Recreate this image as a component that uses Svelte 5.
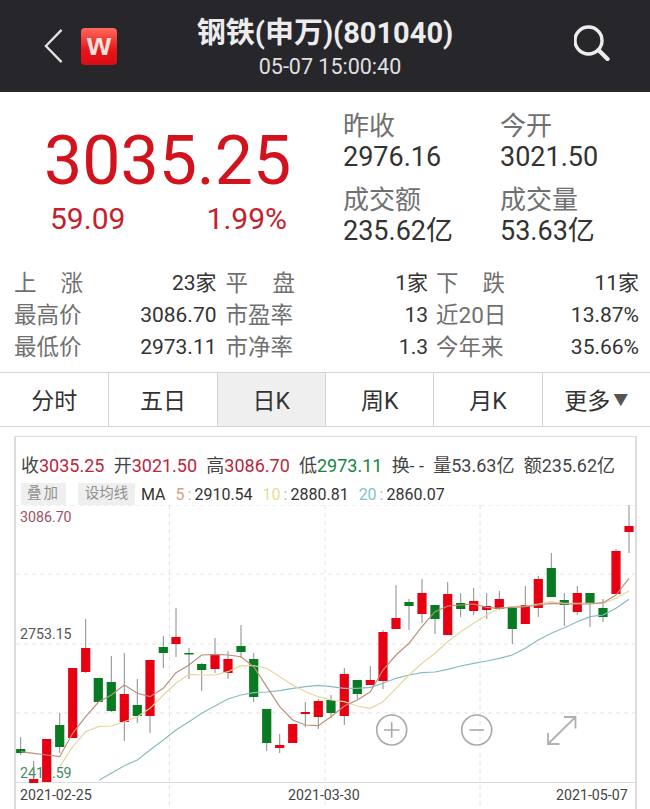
<script>
  const stats = [
    ['上涨', '23家', '平盘', '1家', '下跌', '11家'],
    ['最高价', '3086.70', '市盈率', '13', '近20日', '13.87%'],
    ['最低价', '2973.11', '市净率', '1.3', '今年来', '35.66%']
  ];
  const tabs = ['分时', '五日', '日K', '周K', '月K', '更多'];

  // x, wick top, wick bottom, body top, body bottom, up
  const candles = [
    [20.7, 737, 755, 749, 753, 0], [33.7, 761, 782, 779, 783, 1], [46.7, 739, 782, 739, 782, 1],
    [59.7, 713, 753, 725, 747, 0], [72.7, 668, 738, 668, 738, 1], [85.7, 619, 673, 648, 672, 1],
    [98.3, 678, 702, 678, 702, 0], [111.3, 656, 712, 682, 711, 0], [124.3, 653, 741, 694, 722, 1],
    [137.3, 679, 723, 705, 716, 0], [150, 660, 733, 660, 716, 1], [163.3, 636, 668, 647, 653, 0],
    [176, 608, 657, 637, 644, 1], [189, 648, 679, 653, 654.5, 0], [201.7, 663, 691, 664, 670, 0],
    [215, 638, 673, 655, 669, 1], [228, 651, 679, 659, 673, 1], [241, 625, 658, 646, 652, 0],
    [253.7, 653, 702, 659, 697, 0], [266.7, 709, 751, 709, 743, 0], [279.7, 734, 753, 745, 748, 1],
    [292.7, 724, 743, 724, 743, 1], [305.3, 702, 727, 712, 714, 1], [318.3, 699, 729, 701, 717, 1],
    [331, 695, 718, 700, 713, 0], [344.3, 668, 725, 674, 716, 1], [357.3, 680, 699, 680, 694, 0],
    [370.3, 666, 685, 680, 685, 1], [383, 630, 689, 632, 681, 1], [396, 585, 629, 618, 629, 1],
    [409, 599, 630, 602, 606, 0], [422, 579, 623, 593, 614, 1], [435, 605, 634, 605, 619, 0],
    [447.7, 582, 635, 594, 635, 1], [460.7, 593, 617, 603, 609, 0], [473.7, 588, 615, 601, 611, 1],
    [486.7, 593, 619, 606, 610, 1], [499.3, 591, 610, 599, 609, 1], [512.3, 608, 644, 608, 629, 0],
    [525.3, 586, 624, 605, 624, 1], [538.3, 576, 617, 579, 608, 1], [551.3, 553, 597, 568, 597, 0],
    [564.3, 593, 626, 600, 605, 0], [577.3, 586, 615, 593, 612, 1], [590, 593, 627, 593, 603, 0],
    [603, 599, 622, 608, 617, 0], [616, 549, 594, 551, 594, 1], [629, 504, 553, 526, 532, 1]
  ];

  const ma5 = '20.7,751.7 33.7,753.3 46.7,755 59.7,756.7 72.7,733.3 85.7,716.7 98.3,702.3 111.3,695 124.3,685 137.3,693.3 150,696.7 163.3,688.3 176,672.7 189,665 201.7,655 215,654.3 228,655 241,656.7 253.7,666.7 266.7,686.7 279.7,706.7 292.7,720 305.3,725 318.3,725.7 331,716.7 344.3,706 357.3,700 370.3,691.7 383,670 396,655 409,643.3 422,626.7 435,611.7 447.7,606 460.7,605 473.7,604 486.7,607.3 499.3,608.3 512.3,607.3 525.3,606.7 538.3,605 551.3,603.3 564.3,604 577.3,604 590,604 603,602.7 616,595 629,578.3';
  const ma10 = '59.7,766.7 72.7,746.7 85.7,731.7 98.3,726.7 111.3,726 124.3,721.7 137.3,716.7 150,708.3 163.3,695 176,683.3 189,674.3 201.7,675 215,675 228,671.7 241,665.7 253.7,665.7 266.7,668.3 279.7,676.7 292.7,685 305.3,691.7 318.3,696.7 331,700 344.3,701.7 357.3,706 370.3,708.3 383,701.7 396,688.3 409,675 422,663.3 435,653.3 447.7,641.7 460.7,631.7 473.7,623.3 486.7,615 499.3,608.3 512.3,606.7 525.3,606 538.3,604 551.3,601.7 564.3,603.3 577.3,603.3 590,603.3 603,603.3 616,598.3 629,591';
  const ma20 = '99.3,780 111.3,773.3 124.3,765.7 137.3,760 150,750 163.3,740 176,730 189,721.7 201.7,713.3 215,706 228,699 241,695 253.7,692.7 266.7,692 279.7,690.7 292.7,688.3 305.3,686.7 318.3,685.3 331,686.7 344.3,688.3 357.3,688.3 370.3,687.3 383,683.3 396,678.3 409,675 422,672.7 435,672 447.7,669.3 460.7,666 473.7,663.3 486.7,661 499.3,658.3 512.3,655 525.3,648.3 538.3,640 551.3,633.3 564.3,627.7 577.3,621.7 590,616.7 603,615 616,608.3 629,599.3';

  const gridY = [505, 574, 644, 713];
  const gridX = [169.5, 325, 480];
  const dates = [[20, '2021-02-25'], [288, '2021-03-30'], [556, '2021-05-07']];
</script>

<main>
  <header>
    <div class="left">
      <svg class="back" viewBox="0 0 20 36" aria-hidden="true">
        <path d="M18.5 1 L2 18 L18.5 35" fill="none" stroke="#e4e4e4" stroke-width="2.4" />
      </svg>
      <span class="logo">w</span>
    </div>
    <div class="title">
      <h1>钢铁(申万)(801040)</h1>
      <p>05-07 15:00:40</p>
    </div>
    <svg class="search" viewBox="0 0 36 36" aria-hidden="true">
      <circle cx="14.5" cy="15.5" r="13.5" fill="none" stroke="#ececec" stroke-width="3.4" />
      <path d="M24.5 25 L33.5 34" stroke="#ececec" stroke-width="4.2" stroke-linecap="round" />
    </svg>
  </header>

  <section class="quote">
    <div class="price">
      <div class="now">3035.25</div>
      <div class="change"><span>59.09</span><span>1.99%</span></div>
    </div>
    <div class="facts">
      <div><label>昨收</label><b>2976.16</b></div>
      <div><label>今开</label><b>3021.50</b></div>
      <div><label>成交额</label><b>235.62亿</b></div>
      <div><label>成交量</label><b>53.63亿</b></div>
    </div>
  </section>

  <section class="stats">
    {#each stats as row, r}
      {#each row as cell, i}
        <span class={i % 2 ? 'val' : r === 0 ? 'key spread' : 'key'}>
          {#if r === 0 && i % 2 === 0}
            <i>{cell[0]}</i><i>{cell[1]}</i>
          {:else}
            {cell}
          {/if}
        </span>
      {/each}
    {/each}
  </section>

  <nav>
    {#each tabs as tab, i}
      <div class="tab" class:on={i === 2}>
        {tab}{#if i === 5}<em>▼</em>{/if}
      </div>
    {/each}
  </nav>

  <section class="card">
    <div class="ohlc">
      <span>收<u class="up">3035.25</u></span>
      <span>开<u class="up">3021.50</u></span>
      <span>高<u class="up">3086.70</u></span>
      <span>低<u class="down">2973.11</u></span>
      <span>换- -</span>
      <span>量53.63亿</span>
      <span>额235.62亿</span>
    </div>
    <div class="ma">
      <span class="tag wide">叠加</span>
      <span class="tag">设均线</span>
      <span class="malabel">MA</span>
      <span><u class="c5">5</u><u class="sep">:</u>2910.54</span>
      <span><u class="c10">10</u><u class="sep">:</u>2880.81</span>
      <span><u class="c20">20</u><u class="sep">:</u>2860.07</span>
    </div>
    <svg class="chart" viewBox="16 505 619 304" aria-hidden="true">
      {#each gridY as y}
        <line x1="16" x2="635" y1={y} y2={y} class="grid" />
      {/each}
      {#each gridX as x}
        <line x1={x} x2={x} y1="505" y2="809" class="grid" />
      {/each}
      <line x1="16" x2="635" y1="782.5" y2="782.5" stroke="#dcdcdc" />

      <text x="20" y="522" class="axis" fill="#a0505e">3086.70</text>
      <text x="20" y="639" class="axis" fill="#555">2753.15</text>
      <text x="20" y="778" class="axis" fill="#3f8a63">2419.59</text>
      {#each dates as [x, d]}
        <text x={x} y="800" class="axis" fill="#444">{d}</text>
      {/each}

      {#each candles as [x, wt, wb, bt, bb, up]}
        <line x1={x} x2={x} y1={wt} y2={wb} stroke="#8a8a8a" stroke-width="1" />
        <rect x={x - 4.6} y={bt} width="9.2" height={bb - bt} fill={up ? '#e60012' : '#087a22'} />
      {/each}

      <polyline points={ma20} fill="none" stroke="#86bcc0" stroke-width="1.2" />
      <polyline points={ma10} fill="none" stroke="#e4d79c" stroke-width="1.2" />
      <polyline points={ma5} fill="none" stroke="#b9917c" stroke-width="1.2" />

      <g fill="none" stroke="#a9a9a9" stroke-width="1.6">
        <circle cx="391.7" cy="730" r="15" />
        <path d="M384 730 H399.4 M391.7 722.3 V737.7" />
        <circle cx="476.7" cy="730" r="15" />
        <path d="M469.5 730 H484" />
      </g>
      <g fill="none" stroke="#b0b0b0" stroke-width="1.8">
        <path d="M548 744 L575.5 717 M564 717 H575.5 V728.5 M548 733 V744 H559.5" />
      </g>
    </svg>
  </section>
</main>

<style>
  :global(body) {
    background: #fff;
    height: 809px;
    overflow: hidden;
  }

  main {
    width: 650px;
    height: 809px;
    overflow: hidden;
    font-family: Roboto, "Noto Sans CJK SC", sans-serif;
    color: #333;
  }

  header {
    height: 92px;
    background: #26262b;
    display: grid;
    grid-template-columns: 1fr auto 1fr;
    align-items: center;
    padding: 0 40px;
    box-sizing: border-box;
  }

  .left {
    display: flex;
    align-items: center;
    gap: 18px;
    margin-left: 4px;
  }

  .back {
    width: 19px;
    height: 36px;
  }

  .logo {
    width: 36px;
    height: 37px;
    border-radius: 4px;
    background: linear-gradient(#ff6a5c, #e8141a 60%, #d80f14);
    color: #fbe3dc;
    font: bold 31px/33px "Liberation Sans", sans-serif;
    text-align: center;
  }

  .title {
    text-align: center;
    color: #ececec;
    padding-top: 4px;
  }

  .title h1 {
    margin: 0;
    font-size: 29px;
    line-height: 32px;
    font-weight: 700;
  }

  .title p {
    margin: 6px 0 0;
    padding-left: 10px;
    font-size: 21.5px;
    line-height: 24px;
    color: #e0e0e0;
  }

  .search {
    width: 36px;
    height: 36px;
    justify-self: end;
    margin-bottom: 7px;
  }

  .quote {
    display: flex;
    height: 170px;
    box-sizing: border-box;
    padding: 18px 0 0 44px;
  }

  .price {
    width: 299px;
    padding-top: 12px;
  }

  .now {
    font-size: 68px;
    line-height: 78px;
    color: #d2121c;
  }

  .change {
    display: flex;
    justify-content: space-between;
    width: 237px;
    margin: 2px 0 0 6px;
    font-size: 30px;
    line-height: 34px;
    color: #c5202c;
  }

  .facts {
    display: grid;
    grid-template-columns: 157px 140px;
    grid-auto-rows: 63px;
    row-gap: 11px;
  }

  .facts div {
    display: flex;
    flex-direction: column;
  }

  .facts label {
    font-size: 26px;
    line-height: 32px;
    color: #707070;
  }

  .facts b {
    font-weight: 400;
    font-size: 27px;
    line-height: 31px;
    color: #333;
  }

  .stats {
    display: grid;
    grid-template-columns: 69px 133.5px 78.5px 133px 77px 134px;
    padding-left: 14px;
    margin-top: 5px;
    font-size: 21px;
    line-height: 32px;
  }

  .stats .key {
    font-size: 22.5px;
    color: #707070;
    white-space: nowrap;
  }

  .stats .key:nth-child(6n + 3) {
    margin-left: 9px;
  }

  .stats .key:nth-child(6n + 5) {
    margin-left: 8px;
  }

  .stats .spread {
    display: flex;
    justify-content: space-between;
  }

  .stats .key i {
    font-style: normal;
  }

  .stats .val {
    text-align: right;
    color: #333;
  }

  nav {
    display: grid;
    grid-template-columns: repeat(6, 1fr);
    height: 55px;
    margin-top: 9px;
    border-top: 1px solid #d4d4d4;
    border-bottom: 1px solid #d4d4d4;
    box-sizing: border-box;
  }

  .tab {
    display: flex;
    align-items: center;
    justify-content: center;
    padding-bottom: 2px;
    font-size: 23px;
    color: #333;
    border-left: 1px solid #d4d4d4;
  }

  .tab:first-child {
    border-left: 0;
  }

  .tab.on {
    background: #efefef;
  }

  .tab em {
    font-style: normal;
    font-size: 15px;
    color: #555;
    margin-left: 3px;
  }

  .card {
    margin: 9px 13px 0 14px;
    height: 400px;
    border: 1px solid #dcdcdc;
    border-width: 1px 2px 0 2px;
    box-sizing: border-box;
    overflow: hidden;
  }

  .ohlc {
    display: flex;
    justify-content: space-between;
    padding: 18px 20px 0 5px;
    font-size: 18px;
    line-height: 22px;
    color: #444;
    white-space: nowrap;
  }

  u {
    text-decoration: none;
  }

  .up {
    color: #b8283c;
  }

  .down {
    color: #12853f;
  }

  .ma {
    display: flex;
    align-items: center;
    gap: 10px;
    height: 22px;
    margin-top: 6px;
    padding-left: 5px;
    font-size: 16px;
    color: #333;
    white-space: nowrap;
  }

  .tag {
    background: #efefef;
    color: #8f8f8f;
    font-size: 14.5px;
    line-height: 22px;
    width: 57px;
    text-align: center;
    margin-right: -4px;
  }

  .tag.wide {
    width: 45px;
    letter-spacing: 2px;
    margin-right: 2px;
  }

  .sep {
    color: #bbb;
    margin: 0 3px;
  }

  .c5 {
    color: #d9a183;
  }

  .c10 {
    color: #e6dc9a;
  }

  .c20 {
    color: #7fc4cc;
  }

  .chart {
    display: block;
    width: 619px;
    height: 304px;
  }

  .grid {
    stroke: #e2e2e2;
    stroke-dasharray: 4 4;
    stroke-width: 1;
  }

  .axis {
    font-size: 14.2px;
    font-family: Roboto, sans-serif;
  }
</style>
